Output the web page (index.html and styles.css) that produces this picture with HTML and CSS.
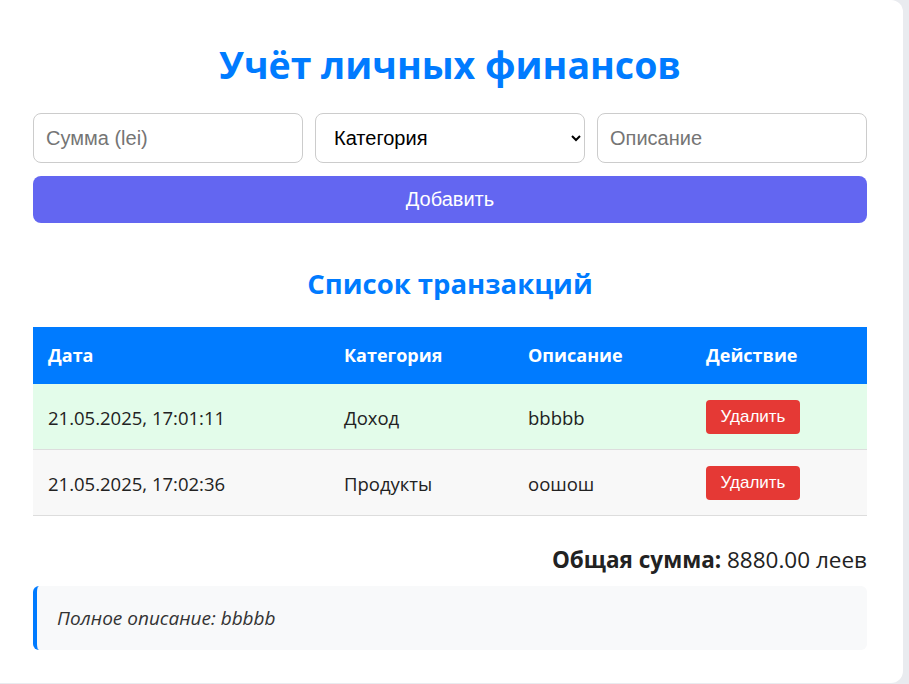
FILE: index.html
```html
<!DOCTYPE html>
<html lang="ru">
<head>
<meta charset="utf-8">
<title>Учёт личных финансов</title>
<link rel="stylesheet" href="styles.css">
</head>
<body>
<div class="page">
  <main class="card">
    <h1 class="title">Учёт личных финансов</h1>
    <form class="form">
      <div class="fields">
        <input class="field" type="text" placeholder="Сумма (lei)">
        <select class="field select">
          <option>Категория</option>
        </select>
        <input class="field" type="text" placeholder="Описание">
      </div>
      <button type="button" class="add-btn">Добавить</button>
    </form>

    <h2 class="subtitle">Список транзакций</h2>

    <table class="table">
      <colgroup>
        <col class="c-date"><col class="c-cat"><col class="c-desc"><col class="c-act">
      </colgroup>
      <thead>
        <tr><th>Дата</th><th>Категория</th><th>Описание</th><th>Действие</th></tr>
      </thead>
      <tbody>
        <tr class="row income">
          <td>21.05.2025, 17:01:11</td><td>Доход</td><td>bbbbb</td>
          <td><button type="button" class="del-btn">Удалить</button></td>
        </tr>
        <tr class="row expense">
          <td>21.05.2025, 17:02:36</td><td>Продукты</td><td>оошош</td>
          <td><button type="button" class="del-btn">Удалить</button></td>
        </tr>
      </tbody>
    </table>

    <p class="total"><strong>Общая сумма:</strong> 8880.00 леев</p>

    <div class="details">Полное описание: bbbbb</div>
  </main>
</div>
</body>
</html>
```

FILE: styles.css
```css
* { box-sizing: border-box; }

html, body {
  margin: 0;
  padding: 0;
}

body {
  background: #e9ebef;
  font-family: "Open Sans", "Noto Sans", sans-serif;
  color: #222;
}

.page {
  width: 903px;
  height: 684px;
}

.card {
  background: #fff;
  height: 683px;
  border-radius: 0 12px 12px 0;
  padding: 42px 36px 0 33px;
}

.title {
  margin: 0;
  text-align: center;
  color: #007bff;
  font-size: 37.5px;
  line-height: 46px;
  font-weight: 700;
}

.form {
  margin-top: 25px;
}

.fields {
  display: grid;
  grid-template-columns: 1fr 1fr 1fr;
  gap: 12px;
}

.field {
  width: 100%;
  height: 50px;
  border: 1px solid #ccc;
  border-radius: 8px;
  padding: 0 12px;
  font-family: "Liberation Sans", Arial, sans-serif;
  font-size: 20px;
  color: #000;
  background: #fff;
}

.field::placeholder {
  color: #757575;
}

.select {
  padding-left: 14px;
  padding-right: 4px;
}

.add-btn {
  display: block;
  width: 100%;
  height: 47px;
  margin-top: 13px;
  border: 0;
  border-radius: 8px;
  background: #6366f1;
  color: #fff;
  font-family: "Liberation Sans", Arial, sans-serif;
  font-size: 20px;
}

.subtitle {
  margin: 42px 0 0;
  text-align: center;
  color: #007bff;
  font-size: 27.5px;
  line-height: 37px;
  font-weight: 700;
}

.table {
  margin-top: 25px;
  width: 100%;
  border-collapse: collapse;
  table-layout: fixed;
}

.c-date { width: 296px; }
.c-cat { width: 184px; }
.c-desc { width: 178px; }
.c-act { width: 176px; }

.table th {
  background: #007bff;
  color: #fff;
  text-align: left;
  font-size: 18px;
  font-weight: 700;
  line-height: 27px;
  padding: 15px 15px;
}

.table td {
  font-size: 18.5px;
  line-height: 27px;
  padding: 16px 15px 15px;
  border-bottom: 1px solid #ddd;
  color: #222;
}

.row.income td { background: #e3fcea; }
.row.expense td { background: #f8f8f8; }

.del-btn {
  display: block;
  width: 94px;
  height: 34px;
  border: 0;
  border-radius: 4px;
  background: #e53935;
  color: #fff;
  font-family: "Liberation Sans", Arial, sans-serif;
  font-size: 17px;
  padding: 0;
}

.total {
  margin: 29px 0 0;
  text-align: right;
  font-size: 22.5px;
  line-height: 30px;
  color: #222;
}

.total strong { font-weight: 700; }

.details {
  margin-top: 11px;
  background: #f8f9fa;
  border-left: 4px solid #007bff;
  border-radius: 6px;
  padding: 19px 20px;
  height: 64px;
  font-style: italic;
  font-size: 19px;
  line-height: 26px;
  color: #333;
}
```
